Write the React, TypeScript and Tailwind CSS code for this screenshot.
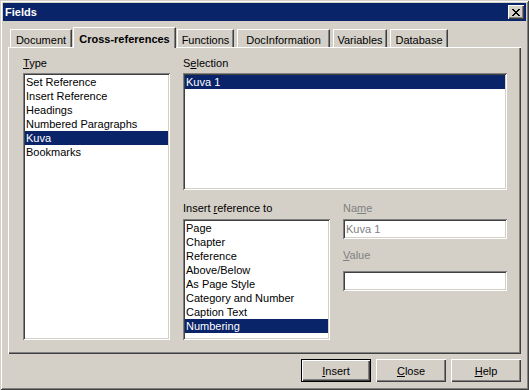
import React from 'react';

const sunken =
    'shadow-[inset_1px_1px_0_#808080,inset_-1px_-1px_0_#ffffff,inset_2px_2px_0_#404040,inset_-2px_-2px_0_#d4d0c8]';
const raised =
    'shadow-[inset_1px_1px_0_#ffffff,inset_-1px_-1px_0_#404040,inset_-2px_-2px_0_#808080]';

interface Tab {
    label: string;
    width: string;
    active?: boolean;
}

const tabs: Tab[] = [
    { label: 'Document', width: 'w-[62px]' },
    { label: 'Cross-references', width: 'w-[103px]', active: true },
    { label: 'Functions', width: 'w-[57px]' },
    { label: 'DocInformation', width: 'w-[93px]' },
    { label: 'Variables', width: 'w-[54px]' },
    { label: 'Database', width: 'w-[58px]' },
];

const typeItems = ['Set Reference', 'Insert Reference', 'Headings', 'Numbered Paragraphs', 'Kuva', 'Bookmarks'];
const refItems = [
    'Page',
    'Chapter',
    'Reference',
    'Above/Below',
    'As Page Style',
    'Category and Number',
    'Caption Text',
    'Numbering',
];

function ListBox({ items, selected, className }: { items: string[]; selected: string; className: string }) {
    return (
        <div className={`${sunken} bg-white p-[2px] overflow-hidden ${className}`}>
            {items.map((item) => (
                <div
                    key={item}
                    className={`h-[14px] leading-[14px] pl-[1px] whitespace-nowrap ${
                        item === selected ? 'bg-[#0a246a] text-white' : 'text-black'
                    }`}
                >
                    {item}
                </div>
            ))}
        </div>
    );
}

function CloseGlyph() {
    // classic 8x7 pixel cross
    const rows = [
        [0, 1, 6, 7],
        [1, 2, 5, 6],
        [2, 3, 4, 5],
        [3, 4],
        [2, 3, 4, 5],
        [1, 2, 5, 6],
        [0, 1, 6, 7],
    ];
    return (
        <svg width="8" height="7" viewBox="0 0 8 7" shapeRendering="crispEdges">
            {rows.map((cols, y) =>
                cols.map((x) => <rect key={`${x}-${y}`} x={x} y={y} width="1" height="1" fill="#000" />)
            )}
        </svg>
    );
}

export default function App() {
    return (
        <div
            className={`w-[529px] h-[390px] bg-[#d4d0c8] p-[3px] text-[11px] leading-[14px] text-black font-['Liberation_Sans',Arial,sans-serif] shadow-[inset_1px_1px_0_#d4d0c8,inset_-1px_-1px_0_#404040,inset_2px_2px_0_#ffffff,inset_-2px_-2px_0_#808080]`}
        >
            {/* Title bar */}
            <div className="h-[18px] bg-[#0a246a] flex items-center justify-between pl-[2px] pr-[2px]">
                <span className="font-bold text-white">Fields</span>
                <div className={`w-[16px] h-[14px] bg-[#d4d0c8] ${raised} flex items-center justify-center`}>
                    <CloseGlyph />
                </div>
            </div>

            <div className="px-[5px]">
                {/* Tabs */}
                <div className="mt-[6px] h-[21px] -mb-[1px] flex items-end gap-[3px] pl-[2px]">
                    {tabs.map((tab) =>
                        tab.active ? (
                            <div
                                key={tab.label}
                                className={`${tab.width} h-[21px] -mx-[2px] relative z-10 bg-[#d4d0c8] border-l border-t border-white border-r border-r-[#404040] shadow-[inset_-1px_0_0_#808080] pt-[4px] text-center font-bold whitespace-nowrap`}
                            >
                                {tab.label}
                            </div>
                        ) : (
                            <div
                                key={tab.label}
                                className={`${tab.width} h-[18px] mb-[1px] border-l border-t border-white border-r border-r-[#404040] shadow-[inset_-1px_0_0_#808080] pt-[3px] text-center whitespace-nowrap`}
                            >
                                {tab.label}
                            </div>
                        )
                    )}
                </div>

                {/* Tab page */}
                <div
                    className="h-[307px] shadow-[inset_1px_1px_0_#ffffff,inset_-1px_-1px_0_#404040,inset_-2px_-2px_0_#808080] pt-[9px] pl-[15px] pr-[14px] flex"
                >
                    <div className="w-[147px] flex flex-col">
                        <div className="h-[14px] mb-[3px]">
                            <u>T</u>ype
                        </div>
                        <ListBox items={typeItems} selected="Kuva" className="h-[267px]" />
                    </div>

                    <div className="ml-[13px] w-[324px] flex flex-col">
                        <div className="h-[14px] mb-[3px]">
                            S<u>e</u>lection
                        </div>
                        <ListBox items={['Kuva 1']} selected="Kuva 1" className="h-[117px]" />

                        <div className="mt-[11px] flex">
                            <div className="w-[147px] flex flex-col">
                                <div className="h-[14px] mb-[4px] whitespace-nowrap">
                                    Insert <u>r</u>eference to
                                </div>
                                <ListBox items={refItems} selected="Numbering" className="h-[121px]" />
                            </div>

                            <div className="ml-[13px] w-[164px] flex flex-col text-[#808080]">
                                <div className="h-[14px] mb-[4px]">
                                    Na<u>m</u>e
                                </div>
                                <div className={`h-[20px] bg-white ${sunken} pl-[3px] flex items-center`}>Kuva 1</div>
                                <div className="h-[14px] mt-[9px] mb-[9px]">
                                    <u>V</u>alue
                                </div>
                                <div className={`h-[20px] bg-white ${sunken}`} />
                            </div>
                        </div>
                    </div>
                </div>

                {/* Buttons */}
                <div className="mt-[5px] flex justify-end gap-[5px]">
                    <div className="w-[70px] h-[23px] border border-black flex">
                        <div className={`flex-1 ${raised} flex items-center justify-center`}>
                            <span>
                                <u>I</u>nsert
                            </span>
                        </div>
                    </div>
                    <div className={`w-[70px] h-[23px] ${raised} flex items-center justify-center`}>
                        <span>
                            <u>C</u>lose
                        </span>
                    </div>
                    <div className={`w-[70px] h-[23px] ${raised} flex items-center justify-center`}>
                        <span>
                            <u>H</u>elp
                        </span>
                    </div>
                </div>
            </div>
        </div>
    );
}
